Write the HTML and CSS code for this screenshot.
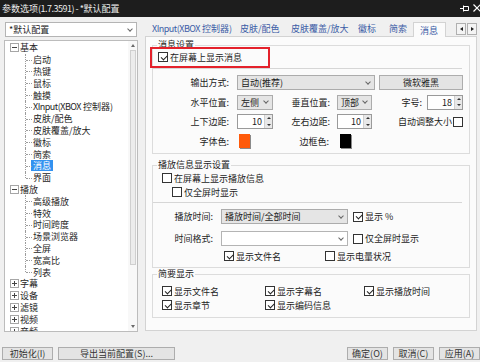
FILE: index.html
```html
<!DOCTYPE html>
<html lang="en">
<head>
  <meta charset="utf-8">
  <title>参数选项</title>
<link rel="stylesheet" href="styles.css">
</head>
<body>
  <header class="titlebar">
    <span>参数选项<span class="lat">(1.7.3591) - *</span>默认配置</span>
    <span class="win-btns">
      <svg width="9" height="7" viewBox="0 0 9 7"><path d="M0 3.5h3M3.5 0.5v6M3.5 1.5h5v4h-5" fill="none" stroke="#fff"/></svg>
      <svg width="8" height="8" viewBox="0 0 8 8"><path d="M0.5 0.5l7 7M7.5 0.5l-7 7" stroke="#fff" stroke-width="1.2"/></svg>
    </span>
  </header>

  <div class="content">
    <aside class="sidebar">
      <div class="combo white preset">*默认配置</div>
      <div class="tree">
        <ul class="tree-list">
          <li>
            <div class="item"><span class="exp"></span>基本</div>
            <ul class="kids">
              <li><div class="item">启动</div></li>
              <li><div class="item">热键</div></li>
              <li><div class="item">鼠标</div></li>
              <li><div class="item">触摸</div></li>
              <li><div class="item"><span class="lat">XInput(XBOX</span>&nbsp;控制器)</div></li>
              <li><div class="item">皮肤/配色</div></li>
              <li><div class="item">皮肤覆盖/放大</div></li>
              <li><div class="item">徽标</div></li>
              <li><div class="item">简索</div></li>
              <li><div class="item sel"><span>消息</span></div></li>
              <li><div class="item">界面</div></li>
            </ul>
          </li>
          <li>
            <div class="item"><span class="exp"></span>播放</div>
            <ul class="kids">
              <li><div class="item">高级播放</div></li>
              <li><div class="item">特效</div></li>
              <li><div class="item">时间跨度</div></li>
              <li><div class="item">场景浏览器</div></li>
              <li><div class="item">全屏</div></li>
              <li><div class="item">宽高比</div></li>
              <li><div class="item">列表</div></li>
            </ul>
          </li>
          <li><div class="item"><span class="exp plus"></span>字幕</div></li>
          <li><div class="item"><span class="exp plus"></span>设备</div></li>
          <li><div class="item"><span class="exp plus"></span>滤镜</div></li>
          <li><div class="item"><span class="exp plus"></span>视频</div></li>
          <li><div class="item"><span class="exp plus"></span>音频</div></li>
        </ul>
        <div class="vscroll">
          <span class="sarrow up"></span>
          <span class="thumb"></span>
          <span class="sarrow down"></span>
        </div>
      </div>
    </aside>

    <section class="prefs">
      <nav class="tabs">
        <span class="tab t-xinput"><span class="lat">XInput(XBOX</span>&nbsp;控制器)</span>
        <span class="tab t-skin">皮肤/配色</span>
        <span class="tab t-overlay">皮肤覆盖/放大</span>
        <span class="tab t-logo">徽标</span>
        <span class="tab t-search">简索</span>
        <span class="tab active">消息</span>
        <span class="tab-scroll"><span class="tsb left"></span><span class="tsb right"></span></span>
      </nav>

      <div class="page">
        <fieldset class="group msg">
          <legend>消息设置</legend>
          <label class="check in-5"><span class="cb on"></span>在屏幕上显示消息</label>
          <div class="sep"></div>
          <div class="row first">
            <span class="lbl l1">输出方式:</span>
            <span class="combo c-out">自动(推荐)</span>
            <span class="btn b-font">微软雅黑</span>
          </div>
          <div class="row">
            <span class="lbl l1">水平位置:</span>
            <span class="combo c-s1">左侧</span>
            <span class="lbl l2">垂直位置:</span>
            <span class="combo c-s2">顶部</span>
            <span class="lbl l3">字号:</span>
            <span class="spin s3">18<span class="spin-btns"><i></i><i></i></span></span>
          </div>
          <div class="row">
            <span class="lbl l1">上下边距:</span>
            <span class="spin s1">10<span class="spin-btns"><i></i><i></i></span></span>
            <span class="lbl l2">左右边距:</span>
            <span class="spin s2">10<span class="spin-btns"><i></i><i></i></span></span>
            <span class="lbl l4">自动调整大小</span>
            <span class="cb auto"></span>
          </div>
          <div class="row">
            <span class="lbl l1">字体色:</span>
            <span class="swatch orange"></span>
            <span class="lbl l5">边框色:</span>
            <span class="swatch black"></span>
          </div>
        </fieldset>

        <fieldset class="group info">
          <legend>播放信息显示设置</legend>
          <label class="check in-9 first"><span class="cb"></span>在屏幕上显示播放信息</label>
          <label class="check in-19"><span class="cb"></span>仅全屏时显示</label>
          <div class="sep"></div>
          <div class="row r-time">
            <span class="lbl l6">播放时间:</span>
            <span class="combo c-time">播放时间/全部时间</span>
            <label class="check"><span class="cb on"></span>显示 %</label>
          </div>
          <div class="row r-fmt">
            <span class="lbl l6">时间格式:</span>
            <span class="combo white c-time"></span>
            <label class="check"><span class="cb"></span>仅全屏时显示</label>
          </div>
          <div class="checks c-info">
            <label class="check"><span class="cb on"></span>显示文件名</label>
            <label class="check"><span class="cb"></span>显示电量状况</label>
          </div>
        </fieldset>

        <fieldset class="group brief">
          <legend>简要显示</legend>
          <div class="checks c-brief">
            <label class="check"><span class="cb on"></span>显示文件名</label>
            <label class="check"><span class="cb on"></span>显示字幕名</label>
            <label class="check"><span class="cb on"></span>显示播放时间</label>
            <label class="check"><span class="cb on"></span>显示章节</label>
            <label class="check"><span class="cb on"></span>显示编码信息</label>
          </div>
        </fieldset>
      </div>
    </section>
  </div>

  <footer class="footer">
    <span class="btn f-init">初始化(I)</span>
    <span class="btn f-export">导出当前配置(S)...</span>
    <span class="f-right">
      <span class="btn f-ok">确定(O)</span>
      <span class="btn f-ok">取消(C)</span>
      <span class="btn f-ok">应用(A)</span>
    </span>
  </footer>

  <div class="highlight"></div>
</body>
</html>
```

FILE: styles.css
```css
* {
  box-sizing: border-box;
}
body {
  margin: 0;
  width: 480px;
  height: 362px;
  overflow: hidden;
  position: relative;
  background: #f0f0f0;
  color: #1b1b1b;
  font-family: "Noto Sans CJK SC", "Noto Sans", sans-serif;
  font-size: 9px;
  line-height: 11px;
}
ul {
  list-style: none;
  margin: 0;
  padding: 0;
}
label {
  cursor: default;
}
/* latin runs are a little narrower in the original UI font */
.lat {
  letter-spacing: -0.5px;
}

/* title bar */
.titlebar {
  height: 17px;
  background: #1d1d1d;
  color: #ececec;
  display: flex;
  align-items: center;
  justify-content: space-between;
  padding: 0 0 1px 2px;
}
.win-btns {
  display: flex;
  align-items: center;
  gap: 4px;
  margin-right: -1px;
}

.content {
  display: flex;
  height: 323px;
}

/* left side: preset + tree */
.sidebar {
  width: 138px;
  padding: 5px 0 0 4px;
  display: flex;
  flex-direction: column;
  gap: 3px;
}
.preset {
  margin-left: 1px;
  width: 132px;
}
.combo {
  height: 15px;
  border: 1px solid #acacac;
  background: #e5e5e5;
  display: flex;
  align-items: center;
  padding: 0 4px 0 3px;
  white-space: nowrap;
}
.combo.white {
  background: #fff;
  border-color: #b4b4b4;
}
.combo::after {
  content: "";
  flex: none;
  margin-left: auto;
  margin-top: -2px;
  width: 3px;
  height: 3px;
  border-right: 1px solid #666;
  border-bottom: 1px solid #666;
  transform: rotate(45deg);
}

.tree {
  width: 134px;
  height: 292px;
  border: 1px solid #bcbcbc;
  background: #fff;
  display: flex;
  overflow: hidden;
}
.tree-list {
  flex: 1;
  padding: 1px 0 0 5px;
  color: #262626;
}
.item {
  height: 11.8px;
  display: flex;
  align-items: center;
  white-space: nowrap;
}
.exp {
  flex: none;
  width: 9px;
  height: 9px;
  margin-right: 1px;
  border: 1px solid #a6a6a6;
  background: linear-gradient(#444, #444) center / 5px 1px no-repeat, #fff;
}
.exp.plus {
  background: linear-gradient(#444, #444) center / 5px 1px no-repeat,
    linear-gradient(#444, #444) center / 1px 5px no-repeat, #fff;
}
.kids {
  padding-left: 15px;
}
.kids li {
  position: relative;
  padding-left: 8px;
}
.kids li::before {
  content: "";
  position: absolute;
  left: 0;
  top: 0;
  bottom: 0;
  border-left: 1px dotted #9c9c9c;
}
.kids li:last-child::before {
  bottom: 50%;
}
.kids li::after {
  content: "";
  position: absolute;
  left: 1px;
  top: 50%;
  width: 6px;
  border-top: 1px dotted #9c9c9c;
}
.sel span {
  background: #3392f0;
  color: #fff;
  margin-left: -2px;
  padding: 0 2px;
  line-height: 11px;
}

.vscroll {
  width: 9px;
  display: flex;
  flex-direction: column;
  align-items: center;
  background: #f8f8f8;
}
.sarrow {
  height: 9px;
  width: 9px;
  display: flex;
  align-items: center;
  justify-content: center;
}
.sarrow::before {
  content: "";
  border-left: 2.5px solid transparent;
  border-right: 2.5px solid transparent;
}
.sarrow.up::before {
  border-bottom: 3px solid #6a6a6a;
}
.sarrow.down {
  margin-top: auto;
}
.sarrow.down::before {
  border-top: 3px solid #6a6a6a;
}
.thumb {
  width: 6px;
  height: 215px;
  border: 1px solid #cfcfcf;
  background: #ececec;
}

/* right side: tabs + page */
.prefs {
  width: 332px;
  margin-left: 7px;
  padding-top: 4px;
  display: flex;
  flex-direction: column;
}
.tabs {
  height: 16px;
  margin-bottom: -1px;
  padding: 0 0 1px 7px;
  display: flex;
  color: #3b5ca6;
  position: relative;
  z-index: 1;
}
.tab {
  display: flex;
  align-items: center;
  white-space: nowrap;
  overflow: hidden;
}
.t-xinput { width: 88px; }
.t-skin { width: 51px; }
.t-overlay { width: 67px; }
.t-logo { width: 31px; }
.t-search { width: 24px; }
.tab.active {
  width: 33px;
  margin: 1px 0 -1px;
  padding-left: 6px;
  background: #fbfbfb;
  border: 1px solid #d3d3d3;
  border-bottom: none;
}
.tab-scroll {
  margin-left: auto;
  display: flex;
  gap: 1px;
  align-items: center;
}
.tsb {
  width: 10px;
  height: 12px;
  border: 1px solid #b0b0b0;
  background: #f4f4f4;
  display: flex;
  align-items: center;
  justify-content: center;
}
.tsb::before {
  content: "";
  border-top: 2.5px solid transparent;
  border-bottom: 2.5px solid transparent;
}
.tsb.left::before {
  border-right: 3px solid #222;
}
.tsb.right::before {
  border-left: 3px solid #222;
}

.page {
  height: 295px;
  border: 1px solid #d3d3d3;
  background: #fbfbfb;
  padding: 3px 6px 0;
  display: flex;
  flex-direction: column;
}
fieldset {
  margin: 0;
  padding: 0;
  min-width: 0;
  border: 1px solid #dcdcdc;
}
legend {
  margin-left: 4px;
  padding: 0 1px;
  height: 10px;
  line-height: 10px;
}
.group.msg {
  padding-bottom: 4.5px;
}
.group.info {
  margin-top: 6px;
  padding-bottom: 5px;
}
.group.brief {
  margin-top: 1px;
  padding-bottom: 6px;
}

.check {
  display: flex;
  align-items: center;
  gap: 2px;
  height: 12px;
  white-space: nowrap;
}
.cb {
  flex: none;
  width: 10px;
  height: 10px;
  border: 1px solid #333;
  background: #fff;
}
.cb.on::after {
  content: "";
  display: block;
  width: 5px;
  height: 2.5px;
  margin: 1.5px 0 0 1.5px;
  border-left: 1.2px solid #222;
  border-bottom: 1.2px solid #222;
  transform: rotate(-45deg);
}
.msg .check {
  margin-top: 1px;
}
.in-5 { margin-left: 5px; }
.in-9 { margin-left: 9px; }
.in-19 { margin-left: 19px; }
.info .check.first {
  margin-top: 2px;
}
.info .in-19 {
  margin-top: 2px;
}
.sep {
  height: 1px;
  margin: 5px 7px 0 0;
  background: #d6d6d6;
}
.info .sep {
  margin-top: 4px;
}

.row {
  display: flex;
  align-items: center;
  height: 15px;
  margin-top: 4.5px;
}
.row.first {
  margin-top: 6px;
}
.lbl {
  flex: none;
  text-align: right;
  white-space: nowrap;
}
.l1 { width: 76px; margin-right: 8px; }
.l2 { width: 57px; margin-right: 7px; }
.l3 { width: 50px; margin-right: 5px; }
.l4 { width: 80px; margin-right: 1px; }
.l5 { width: 79px; margin-right: 9px; }
.l6 { width: 60px; margin-right: 8px; }
.c-out { width: 138px; }
.c-s1 { width: 36px; }
.c-s2 { width: 35px; }
.c-time { width: 127px; margin-right: 5px; }
.btn {
  height: 15px;
  border: 1px solid #adadad;
  background: #e4e4e4;
  display: flex;
  align-items: center;
  justify-content: center;
  white-space: nowrap;
}
.b-font {
  width: 84px;
  margin-left: 4px;
}
.spin {
  height: 15px;
  border: 1px solid #9a9a9a;
  background: #fff;
  display: flex;
  align-items: center;
  justify-content: flex-end;
}
.s1, .s3 { width: 36px; }
.s2 { width: 35px; }
.spin-btns {
  width: 8px;
  height: 13px;
  margin-left: 2px;
  display: flex;
  flex-direction: column;
  background: #e8e8e8;
  border-left: 1px solid #d0d0d0;
}
.spin-btns i {
  flex: 1;
  display: flex;
  align-items: center;
  justify-content: center;
}
.spin-btns i::before {
  content: "";
  border-left: 2px solid transparent;
  border-right: 2px solid transparent;
}
.spin-btns i:first-child::before {
  border-bottom: 2.5px solid #333;
}
.spin-btns i:last-child::before {
  border-top: 2.5px solid #333;
}
.swatch {
  width: 11px;
  height: 14px;
  margin-left: 2px;
  box-shadow: 1px 1px 0 #8a8a8a;
}
.swatch.orange { background: #ff5a0a; }
.swatch.black { background: #000; }

.r-time {
  margin-top: 6px;
}
.r-fmt {
  margin-top: 7px;
}
.checks {
  display: grid;
}
.c-info {
  grid-template-columns: 101px auto;
  margin: 4px 0 0 71px;
}
.c-brief {
  grid-template-columns: 103px 99px auto;
  row-gap: 2px;
  margin: 6px 0 0 9px;
}

/* bottom buttons */
.footer {
  height: 22px;
  padding: 7px 0 0 2px;
  display: flex;
  color: #333;
}
.footer .btn {
  height: 13px;
}
.f-init { width: 51px; }
.f-export { width: 117px; margin-left: 5px; }
.f-right {
  margin-left: auto;
  display: flex;
  gap: 5px;
}
.f-ok { width: 41px; }

/* red annotation box drawn over the dialog */
.highlight {
  position: absolute;
  left: 150px;
  top: 47px;
  width: 120px;
  height: 21px;
  border: 2px solid #e4212b;
}
```
